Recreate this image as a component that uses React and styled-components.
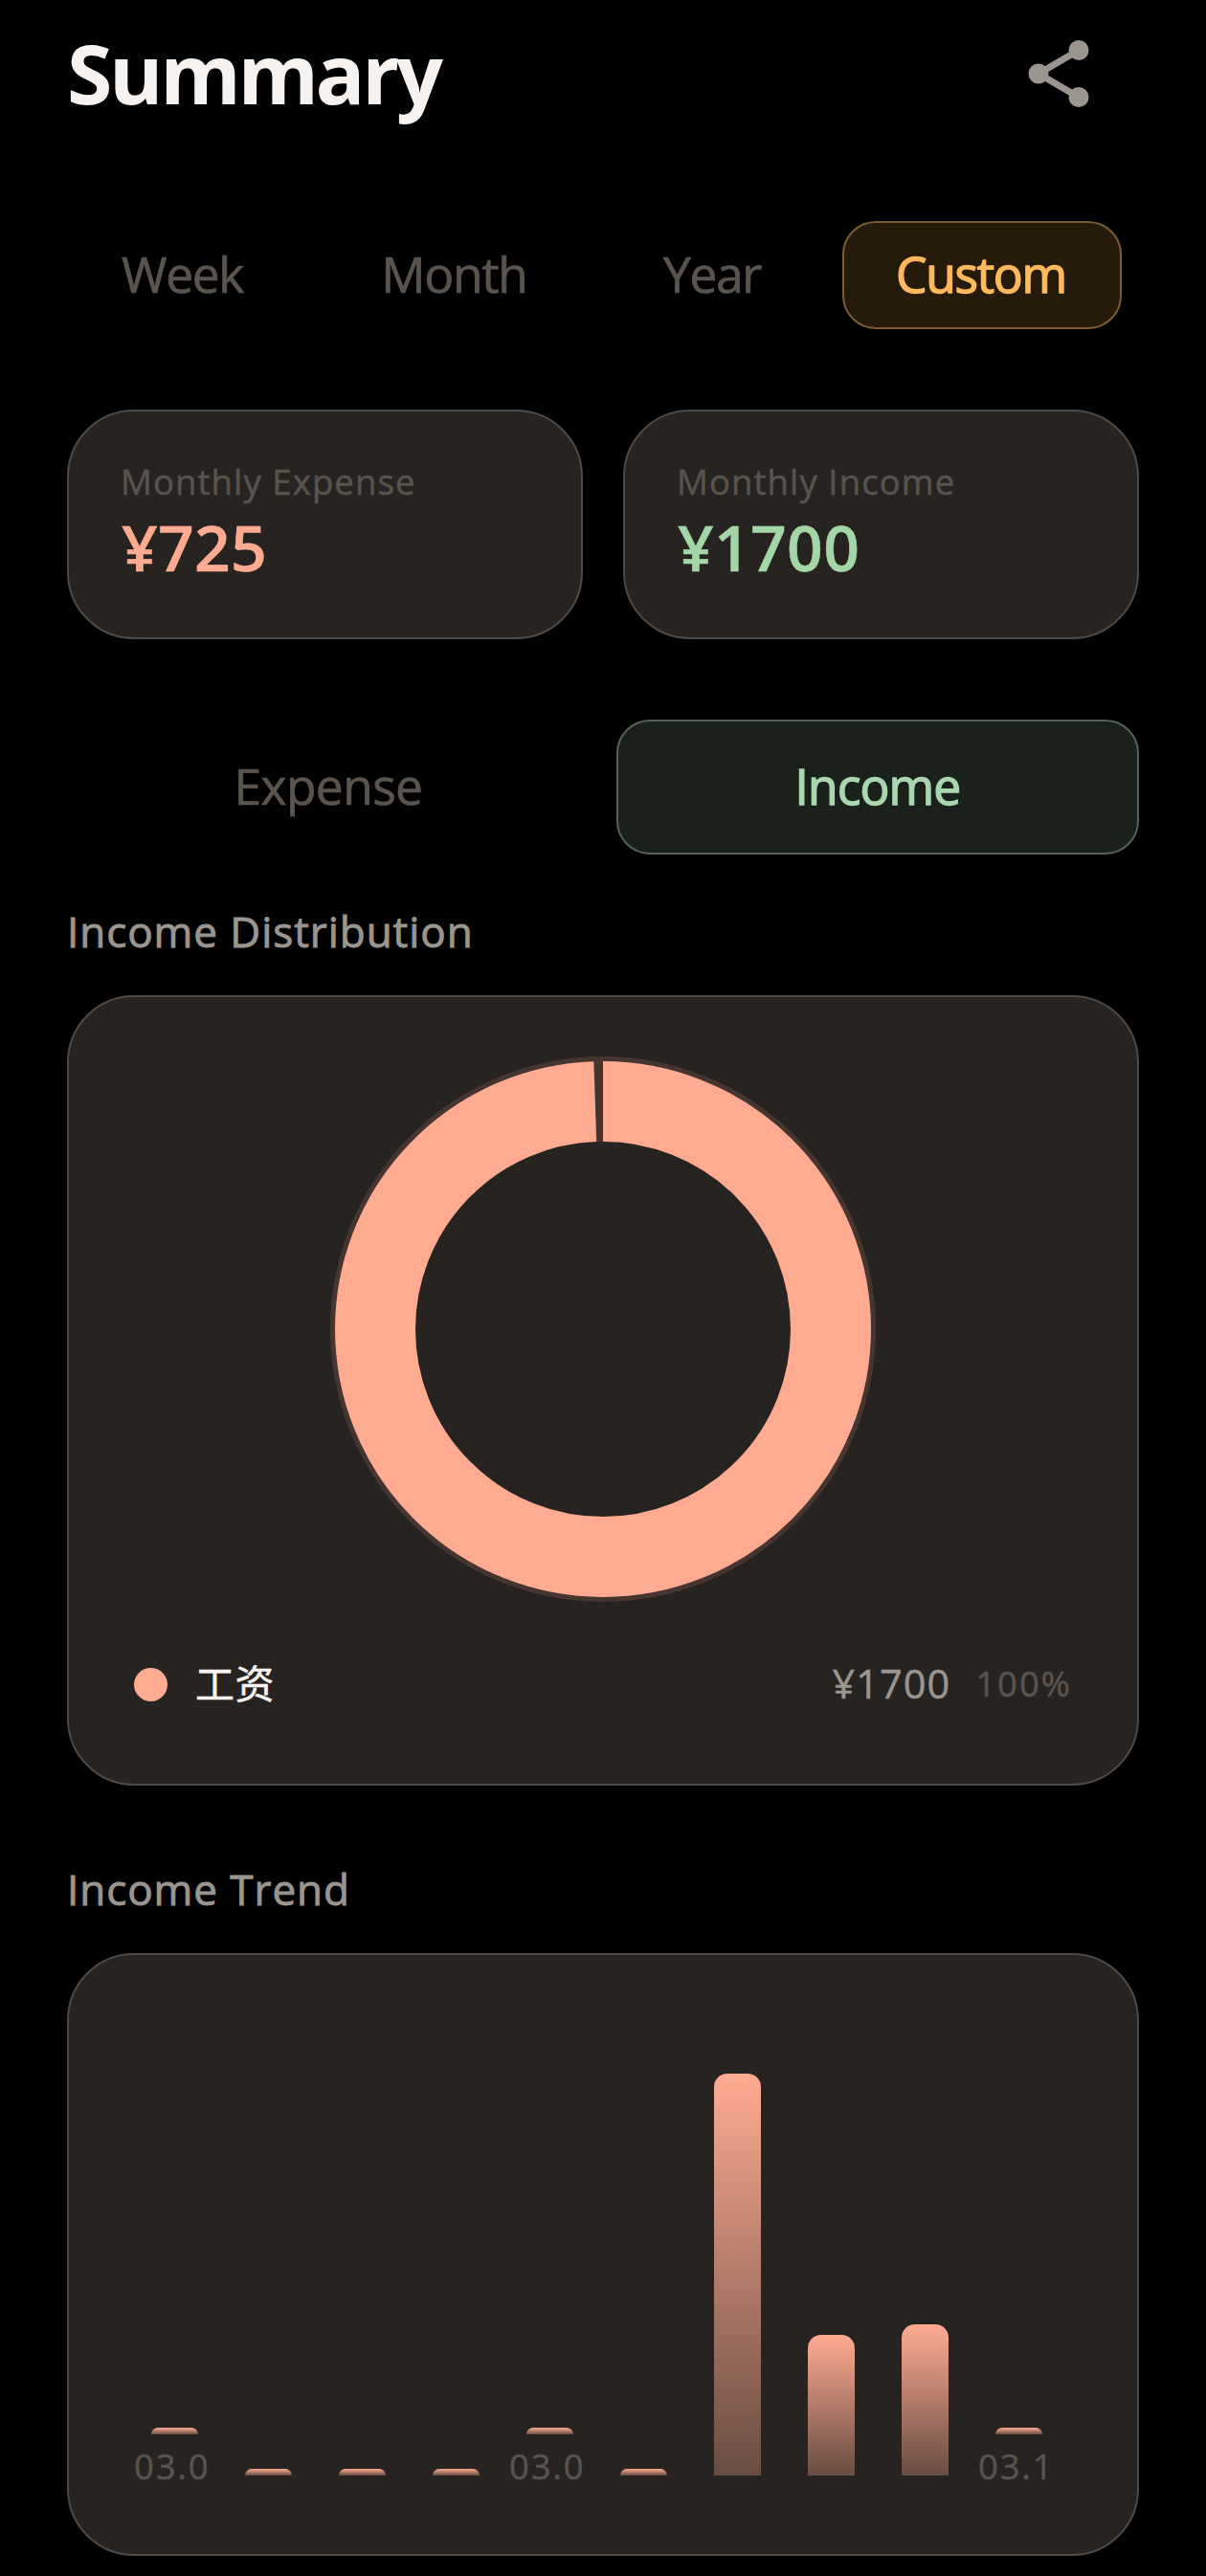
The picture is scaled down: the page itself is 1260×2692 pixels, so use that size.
import React from "react";
import styled, { createGlobalStyle } from "styled-components";

const periods = [
  { label: "Week", width: 243 },
  { label: "Month", width: 269 },
  { label: "Year", width: 214 },
  { label: "Custom", width: 292, active: true },
];

const trend = [
  { height: 7, label: "03.0" },
  { height: 7 },
  { height: 7 },
  { height: 7 },
  { height: 7, label: "03.0" },
  { height: 7 },
  { height: 420 },
  { height: 147 },
  { height: 158 },
  { height: 7, label: "03.1" },
];

const ShareIcon = () => (
  <svg width="84" height="84" viewBox="0 0 24 24" fill="currentColor">
    <path
      d="M18 5 6 12l12 7"
      fill="none"
      stroke="currentColor"
      strokeWidth="2"
    />
    <circle cx="18" cy="5" r="3" />
    <circle cx="6" cy="12" r="3" />
    <circle cx="18" cy="19" r="3" />
  </svg>
);

// the slice stops 2 degrees short of a full turn
const Donut = () => (
  <svg width="570" height="570" viewBox="-285 -285 570 570">
    <circle r="240.5" fill="none" stroke="#463430" strokeWidth="89" />
    <circle
      r="238"
      fill="none"
      stroke="#ffab91"
      strokeWidth="84"
      pathLength="360"
      strokeDasharray="358 2"
      transform="rotate(-90)"
    />
  </svg>
);

const App = () => (
  <React.Fragment>
    <GlobalStyle />
    <Page>
      <Header>
        <Title>Summary</Title>
        <ShareBtn aria-label="Share">
          <ShareIcon />
        </ShareBtn>
      </Header>

      <PeriodTabs>
        {periods.map(({ label, width, active }) => (
          <PeriodTab key={label} $width={width} $active={active}>
            {label}
          </PeriodTab>
        ))}
      </PeriodTabs>

      <Totals>
        <TotalCard>
          <TotalLabel>Monthly Expense</TotalLabel>
          <TotalValue $color="#ffab91">¥725</TotalValue>
        </TotalCard>
        <TotalCard>
          <TotalLabel>Monthly Income</TotalLabel>
          <TotalValue $color="#a5d6a7">¥1700</TotalValue>
        </TotalCard>
      </Totals>

      <TypeTabs>
        <TypeTab>Expense</TypeTab>
        <TypeTab $active>Income</TypeTab>
      </TypeTabs>

      <SectionTitle $top={50}>Income Distribution</SectionTitle>
      <DistributionCard>
        <Donut />
        <Legend>
          <Dot />
          <Category>工资</Category>
          <Amount>¥1700</Amount>
          <Percent>100%</Percent>
        </Legend>
      </DistributionCard>

      <SectionTitle $top={78}>Income Trend</SectionTitle>
      <TrendCard>
        {trend.map(({ height, label }, i) => (
          <Column key={i}>
            <Bar style={{ height }} />
            {label && <DateLabel>{label}</DateLabel>}
          </Column>
        ))}
      </TrendCard>
    </Page>
  </React.Fragment>
);

export default App;

const GlobalStyle = createGlobalStyle`
  * {
    box-sizing: border-box;
  }
  body {
    margin: 0;
    background-color: #000;
    font-family: "Open Sans", "Noto Sans CJK SC", sans-serif;
    -webkit-text-stroke: 0.5px;
  }
  svg {
    display: block;
  }
`;

const Page = styled.main`
  width: 1260px;
  height: 2692px;
  padding: 35px 70px 0;
  overflow: hidden;
  background-color: #000;
`;

const Header = styled.header`
  display: flex;
  align-items: center;
  justify-content: space-between;
  height: 84px;
  padding-right: 42px;
`;

const Title = styled.h1`
  margin: 0;
  padding-bottom: 3px;
  font-size: 86px;
  line-height: 84px;
  font-weight: 700;
  letter-spacing: -3.3px;
  color: #f5f2f0;
  -webkit-text-stroke: 0;
`;

const ShareBtn = styled.button`
  padding: 0;
  border: none;
  background: none;
  color: #9b9590;
`;

const PeriodTabs = styled.div`
  display: flex;
  gap: 28px;
  margin-top: 112px;
`;

const PeriodTab = styled.button`
  width: ${({ $width }) => $width}px;
  height: 113px;
  padding: 0 2px 4px 0;
  border: 2px solid ${({ $active }) => ($active ? "#7a5c35" : "transparent")};
  border-radius: 35px;
  background-color: ${({ $active }) => ($active ? "#261a0b" : "transparent")};
  font-family: inherit;
  font-size: 51.5px;
  letter-spacing: -1.3px;
  color: ${({ $active }) => ($active ? "#ffb85c" : "#5a544f")};
  -webkit-text-stroke: ${({ $active }) => ($active ? 1.4 : 0.7)}px;
`;

const Card = styled.div`
  border: 2px solid #4d4a47;
  border-radius: 70px;
  background-color: #272320;
`;

const Totals = styled.div`
  display: grid;
  grid-template-columns: 1fr 1fr;
  gap: 42px;
  margin-top: 84px;
`;

const TotalCard = styled(Card)`
  height: 240px;
  padding: 54px;
`;

const TotalLabel = styled.div`
  font-size: 36.5px;
  line-height: 39px;
  letter-spacing: 1.1px;
  color: #59534e;
`;

const TotalValue = styled.div`
  margin-top: 7px;
  padding-left: 1px;
  font-size: 66px;
  line-height: 83px;
  font-weight: 600;
  letter-spacing: 0.3px;
  color: ${({ $color }) => $color};
`;

const TypeTabs = styled.div`
  display: grid;
  grid-template-columns: 1fr 1fr;
  gap: 28px;
  margin-top: 84px;
`;

const TypeTab = styled.button`
  height: 141px;
  padding: 0 0 4px;
  border: 2px solid ${({ $active }) => ($active ? "#546355" : "transparent")};
  border-radius: 35px;
  background-color: ${({ $active }) => ($active ? "#1a201a" : "transparent")};
  font-family: inherit;
  font-size: 51.5px;
  letter-spacing: ${({ $active }) => ($active ? -0.9 : -0.6)}px;
  color: ${({ $active }) => ($active ? "#a9d6ae" : "#5a544f")};
  -webkit-text-stroke: ${({ $active }) => ($active ? 1.4 : 0.7)}px;
`;

const SectionTitle = styled.h2`
  margin: ${({ $top }) => $top}px 0 37px;
  font-size: 44px;
  line-height: 60px;
  font-weight: 400;
  letter-spacing: 0.95px;
  color: #9b9590;
  -webkit-text-stroke: 0.9px;
`;

const DistributionCard = styled(Card)`
  display: flex;
  flex-direction: column;
  align-items: center;
  height: 826px;
  padding: 62px 68px 0;
`;

const Legend = styled.div`
  display: flex;
  align-items: center;
  width: 100%;
  height: 60px;
  margin-top: 56px;
`;

const Dot = styled.span`
  width: 35px;
  height: 35px;
  border-radius: 50%;
  background-color: #ffab91;
`;

const Category = styled.span`
  flex: 1;
  margin-left: 29px;
  padding-bottom: 2px;
  font-size: 41px;
  line-height: 60px;
  letter-spacing: 0.5px;
  color: #f5f2f0;
`;

const Amount = styled.span`
  padding-bottom: 3px;
  font-size: 41.5px;
  letter-spacing: 1px;
  color: #9b9590;
`;

const Percent = styled.span`
  margin-left: 26px;
  padding-bottom: 3px;
  font-size: 36.5px;
  letter-spacing: 2px;
  color: #59534e;
`;

const TrendCard = styled(Card)`
  display: flex;
  align-items: flex-end;
  gap: 14px;
  height: 630px;
  padding: 0 68px 82px;
`;

const Column = styled.div`
  display: flex;
  flex-direction: column;
  align-items: center;
  width: 84px;
`;

const Bar = styled.div`
  width: 49px;
  border-radius: 14px 14px 0 0;
  background: linear-gradient(#ffab91, #684c42);
`;

const DateLabel = styled.div`
  align-self: flex-start;
  height: 29px;
  margin-top: 14px;
  font-size: 36.5px;
  line-height: 39px;
  letter-spacing: 1.8px;
  color: #59534e;
`;
